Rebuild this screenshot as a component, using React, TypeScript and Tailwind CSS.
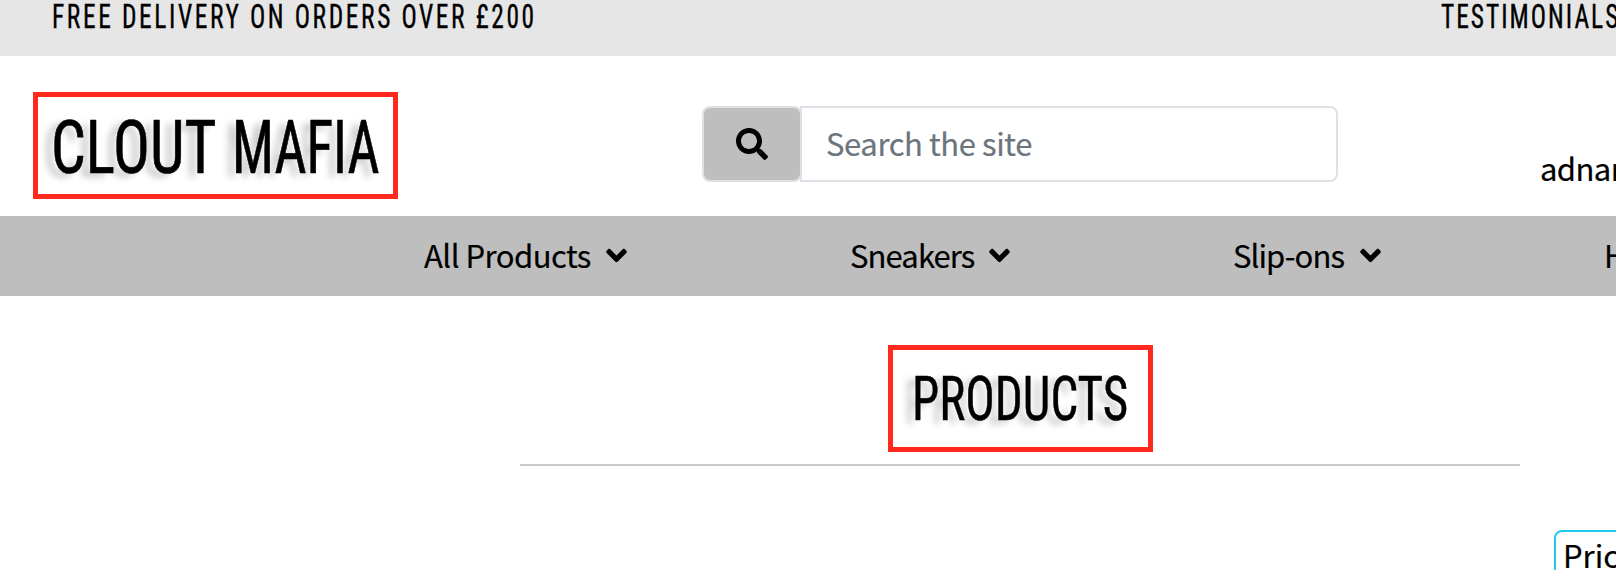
import type { ReactNode } from "react";
import { FaAngleDown, FaSearch } from "react-icons/fa";

function NavItem({ label, className }: { label: ReactNode; className: string }) {
  return (
    <a className={`flex shrink-0 items-center justify-between ${className}`}>
      <span className="-mt-[3px]">{label}</span>
      <FaAngleDown className="-mt-px -mr-[6px] size-[33px]" />
    </a>
  );
}

export default function App() {
  return (
    <div className="flex h-[570px] w-[1616px] flex-col overflow-hidden bg-white font-['Noto_Sans_CJK_SC',sans-serif] text-[31px] leading-[40px] whitespace-nowrap text-black [-webkit-text-stroke:0.2px]">
      <div className="flex h-14 shrink-0 bg-[#e6e6e6] pl-[52px] font-['Roboto_Condensed',sans-serif] text-[33px] leading-[33px] [-webkit-text-stroke:0.4px]">
        <div className="w-[1389px] shrink-0">
          <span className="inline-block origin-left scale-x-[0.77] tracking-[3.4px]">FREE DELIVERY ON ORDERS OVER £200</span>
        </div>
        <div className="shrink-0">
          <span className="inline-block origin-left scale-x-[0.77] tracking-[2.6px]">TESTIMONIALS</span>
        </div>
      </div>

      <header className="flex h-40 shrink-0">
        <h1 className="mt-9 ml-[33px] flex h-[107px] w-[365px] shrink-0 items-center border-[5px] border-[#ff2a1d] pt-[4px] pl-[13px] font-['Roboto_Condensed',sans-serif] text-[74px] font-normal [-webkit-text-stroke:0.7px] [text-shadow:-10px_4px_8px_#c6c6c6]">
          <span className="w-[181px]">
            <span className="inline-block origin-left scale-x-[0.83]">CLOUT</span>
          </span>
          <span>
            <span className="inline-block origin-left scale-x-[0.75]">MAFIA</span>
          </span>
        </h1>
        <div className="mt-[50px] ml-[304px] flex h-[76px] w-[636px] shrink-0">
          <button className="flex w-[100px] items-center justify-center rounded-lg border-2 border-[#dee2e6] bg-[#bebebe]">
            <FaSearch className="-mt-px size-8" />
          </button>
          <div className="-ml-[2px] flex flex-1 items-center rounded-r-lg border-2 border-[#dee2e6] pl-[24px]">
            <span className="-mt-[2px] tracking-[-0.4px] text-[#6c757d]">Search the site</span>
          </div>
        </div>
        <span className="mt-[92px] ml-[202px] shrink-0 tracking-[-0.6px]">adnan</span>
      </header>

      <nav className="flex h-20 shrink-0 items-center bg-[#bebebe] pl-[424px]">
        <NavItem label="All Products" className="w-[203px] tracking-[-0.5px]" />
        <NavItem label="Sneakers" className="ml-[223px] w-[160px] tracking-[-0.9px]" />
        <NavItem label="Slip-ons" className="ml-[223px] w-[148px] tracking-[-0.9px]" />
        <NavItem label="Heels" className="ml-[223px] w-[120px]" />
      </nav>

      <main className="flex flex-1 pl-[520px]">
        <div className="flex w-[1000px] shrink-0 flex-col items-center pt-[49px]">
          <h2 className="flex h-[107px] w-[265px] items-center border-[5px] border-[#ff2a1d] pl-[19px]">
            <span className="inline-block origin-left scale-x-[0.805] font-['Roboto_Condensed',sans-serif] text-[61px] [-webkit-text-stroke:0.5px] [text-shadow:-10px_4px_8px_#c6c6c6]">
              PRODUCTS
            </span>
          </h2>
          <hr className="mt-3 w-full border-t-2 border-[#cacaca]" />
        </div>
        <div className="mt-[234px] ml-[34px] h-20 w-[280px] shrink-0 rounded-lg border-2 border-[#20c9ed] pt-[3px] pl-[7px]">Price</div>
      </main>
    </div>
  );
}
